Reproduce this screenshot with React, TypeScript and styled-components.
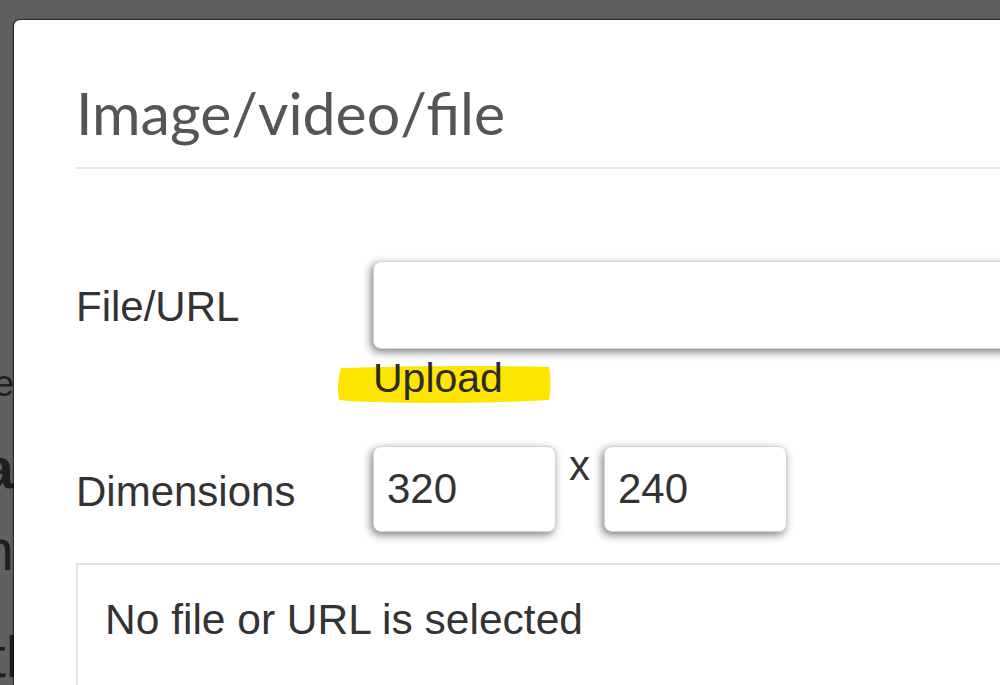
import React from "react";
import styled, { createGlobalStyle } from "styled-components";

const GlobalStyle = createGlobalStyle`
  html, body {
    margin: 0;
    padding: 0;
    height: 100%;
    overflow: hidden;
    background: #606060;
  }
  #root { height: 100%; }
  * { box-sizing: border-box; }
`;

const Screen = styled.div`
  display: flex;
  height: 685px;
  width: 1000px;
  overflow: hidden;
  background: #606060;
  font-family: "Liberation Sans", Arial, sans-serif;
`;

/* dimmed page peeking out behind the dialog */
const PageStrip = styled.div`
  width: 14px;
  flex: none;
  display: flex;
  flex-direction: column;
  overflow: hidden;
`;

const StripRule = styled.div<{ $top: number }>`
  margin-top: ${(p) => p.$top}px;
  height: 1px;
  width: 100%;
  background: #6e6e6e;
`;

const StripLine = styled.div<{ $top: number; $size: number; $lh: number; $bold?: boolean }>`
  margin-top: ${(p) => p.$top}px;
  display: flex;
  justify-content: flex-end;
  white-space: nowrap;
  font-size: ${(p) => p.$size}px;
  line-height: ${(p) => p.$lh}px;
  height: ${(p) => p.$lh}px;
  font-weight: ${(p) => (p.$bold ? 700 : 400)};
  color: #1f1f1f;
`;

const StripText = styled.span<{ $hidden: number }>`
  margin-right: -${(p) => p.$hidden}px;
`;

const Dialog = styled.div`
  flex: 1;
  margin-top: 20px;
  background: #ffffff;
  border-top-left-radius: 6px;
  box-shadow: 0 0 0 1px rgba(0, 0, 0, 0.5), 0 0 4px rgba(0, 0, 0, 0.35);
  padding-left: 62px;
  overflow: hidden;
  display: flex;
  flex-direction: column;
`;

const Header = styled.div`
  padding: 58px 0 18px;
  border-bottom: 2px solid #e6e6e6;
`;

const Title = styled.h1`
  margin: 0;
  font-family: Lato, "Open Sans", sans-serif;
  font-weight: 400;
  font-size: 59px;
  line-height: 1.2;
  color: #555555;
  white-space: nowrap;
`;

const Body = styled.div`
  padding-top: 92px;
  display: flex;
  flex-direction: column;
`;

const FieldRow = styled.div<{ $gap?: number }>`
  display: grid;
  grid-template-columns: 297px 1fr;
  margin-top: ${(p) => p.$gap ?? 0}px;
`;

const Label = styled.label<{ $offset: number }>`
  margin-top: ${(p) => p.$offset}px;
  font-size: 42px;
  line-height: normal;
  color: #333333;
  white-space: nowrap;
`;

const FieldCol = styled.div`
  display: flex;
  flex-direction: column;
  align-items: flex-start;
`;

const TextBox = styled.div<{ $w: number; $h: number }>`
  width: ${(p) => p.$w}px;
  height: ${(p) => p.$h}px;
  flex: none;
  background: #ffffff;
  border: 1px solid #d4d4d4;
  border-radius: 8px;
  box-shadow: -2px 3px 8px rgba(0, 0, 0, 0.5);
  padding-left: 13px;
  display: flex;
  align-items: center;
  font-size: 42px;
  color: #333333;
`;

const UploadLink = styled.span`
  position: relative;
  z-index: 0;
  margin-top: 6px;
  font-size: 41px;
  line-height: normal;
  color: #2b2b2b;
`;

const Highlight = styled.svg`
  position: absolute;
  left: -36px;
  top: 10px;
  width: 214px;
  height: 39px;
  z-index: -1;
`;

const SizeRow = styled.div`
  display: flex;
  align-items: flex-start;
`;

const Times = styled.span`
  margin: -4px 14px 0 13px;
  font-size: 42px;
  line-height: normal;
  color: #333333;
`;

const Preview = styled.div`
  margin-top: 31px;
  border: 2px solid #e2e2e2;
  border-right: none;
  padding: 31px 27px;
  min-height: 200px;
  font-size: 42.5px;
  line-height: normal;
  color: #333333;
  white-space: nowrap;
`;

export default function App() {
  return (
    <>
      <GlobalStyle />
      <Screen>
        <PageStrip>
          <StripRule $top={164} />
          <StripRule $top={97} />
          <StripLine $top={103} $size={36} $lh={40}>
            <StripText $hidden={0}>Choose a file here</StripText>
          </StripLine>
          <StripLine $top={30} $size={58} $lh={67} $bold>
            <StripText $hidden={0}>Media</StripText>
          </StripLine>
          <StripLine $top={15} $size={58} $lh={67}>
            <StripText $hidden={0}>Insert an item in</StripText>
          </StripLine>
          <StripLine $top={40} $size={58} $lh={67}>
            <StripText $hidden={37}>Set the title</StripText>
          </StripLine>
        </PageStrip>
        <Dialog>
          <Header>
            <Title>Image/video/file</Title>
          </Header>
          <Body>
            <FieldRow>
              <Label $offset={22}>File/URL</Label>
              <FieldCol>
                <TextBox $w={700} $h={88} />
                <UploadLink>
                  <Highlight viewBox="0 0 214 39" preserveAspectRatio="none" aria-hidden="true">
                    <path
                      d="M4 3 C60 1 150 0 212 2 C214 12 214 26 212 35 C160 38 90 39 40 37 C25 37 10 36 2 35 C0 24 1 12 4 3 Z"
                      fill="#ffe600"
                    />
                  </Highlight>
                  Upload
                </UploadLink>
              </FieldCol>
            </FieldRow>
            <FieldRow $gap={44}>
              <Label $offset={22}>Dimensions</Label>
              <SizeRow>
                <TextBox $w={183} $h={86}>320</TextBox>
                <Times>x</Times>
                <TextBox $w={183} $h={86}>240</TextBox>
              </SizeRow>
            </FieldRow>
            <Preview>No file or URL is selected</Preview>
          </Body>
        </Dialog>
      </Screen>
    </>
  );
}
